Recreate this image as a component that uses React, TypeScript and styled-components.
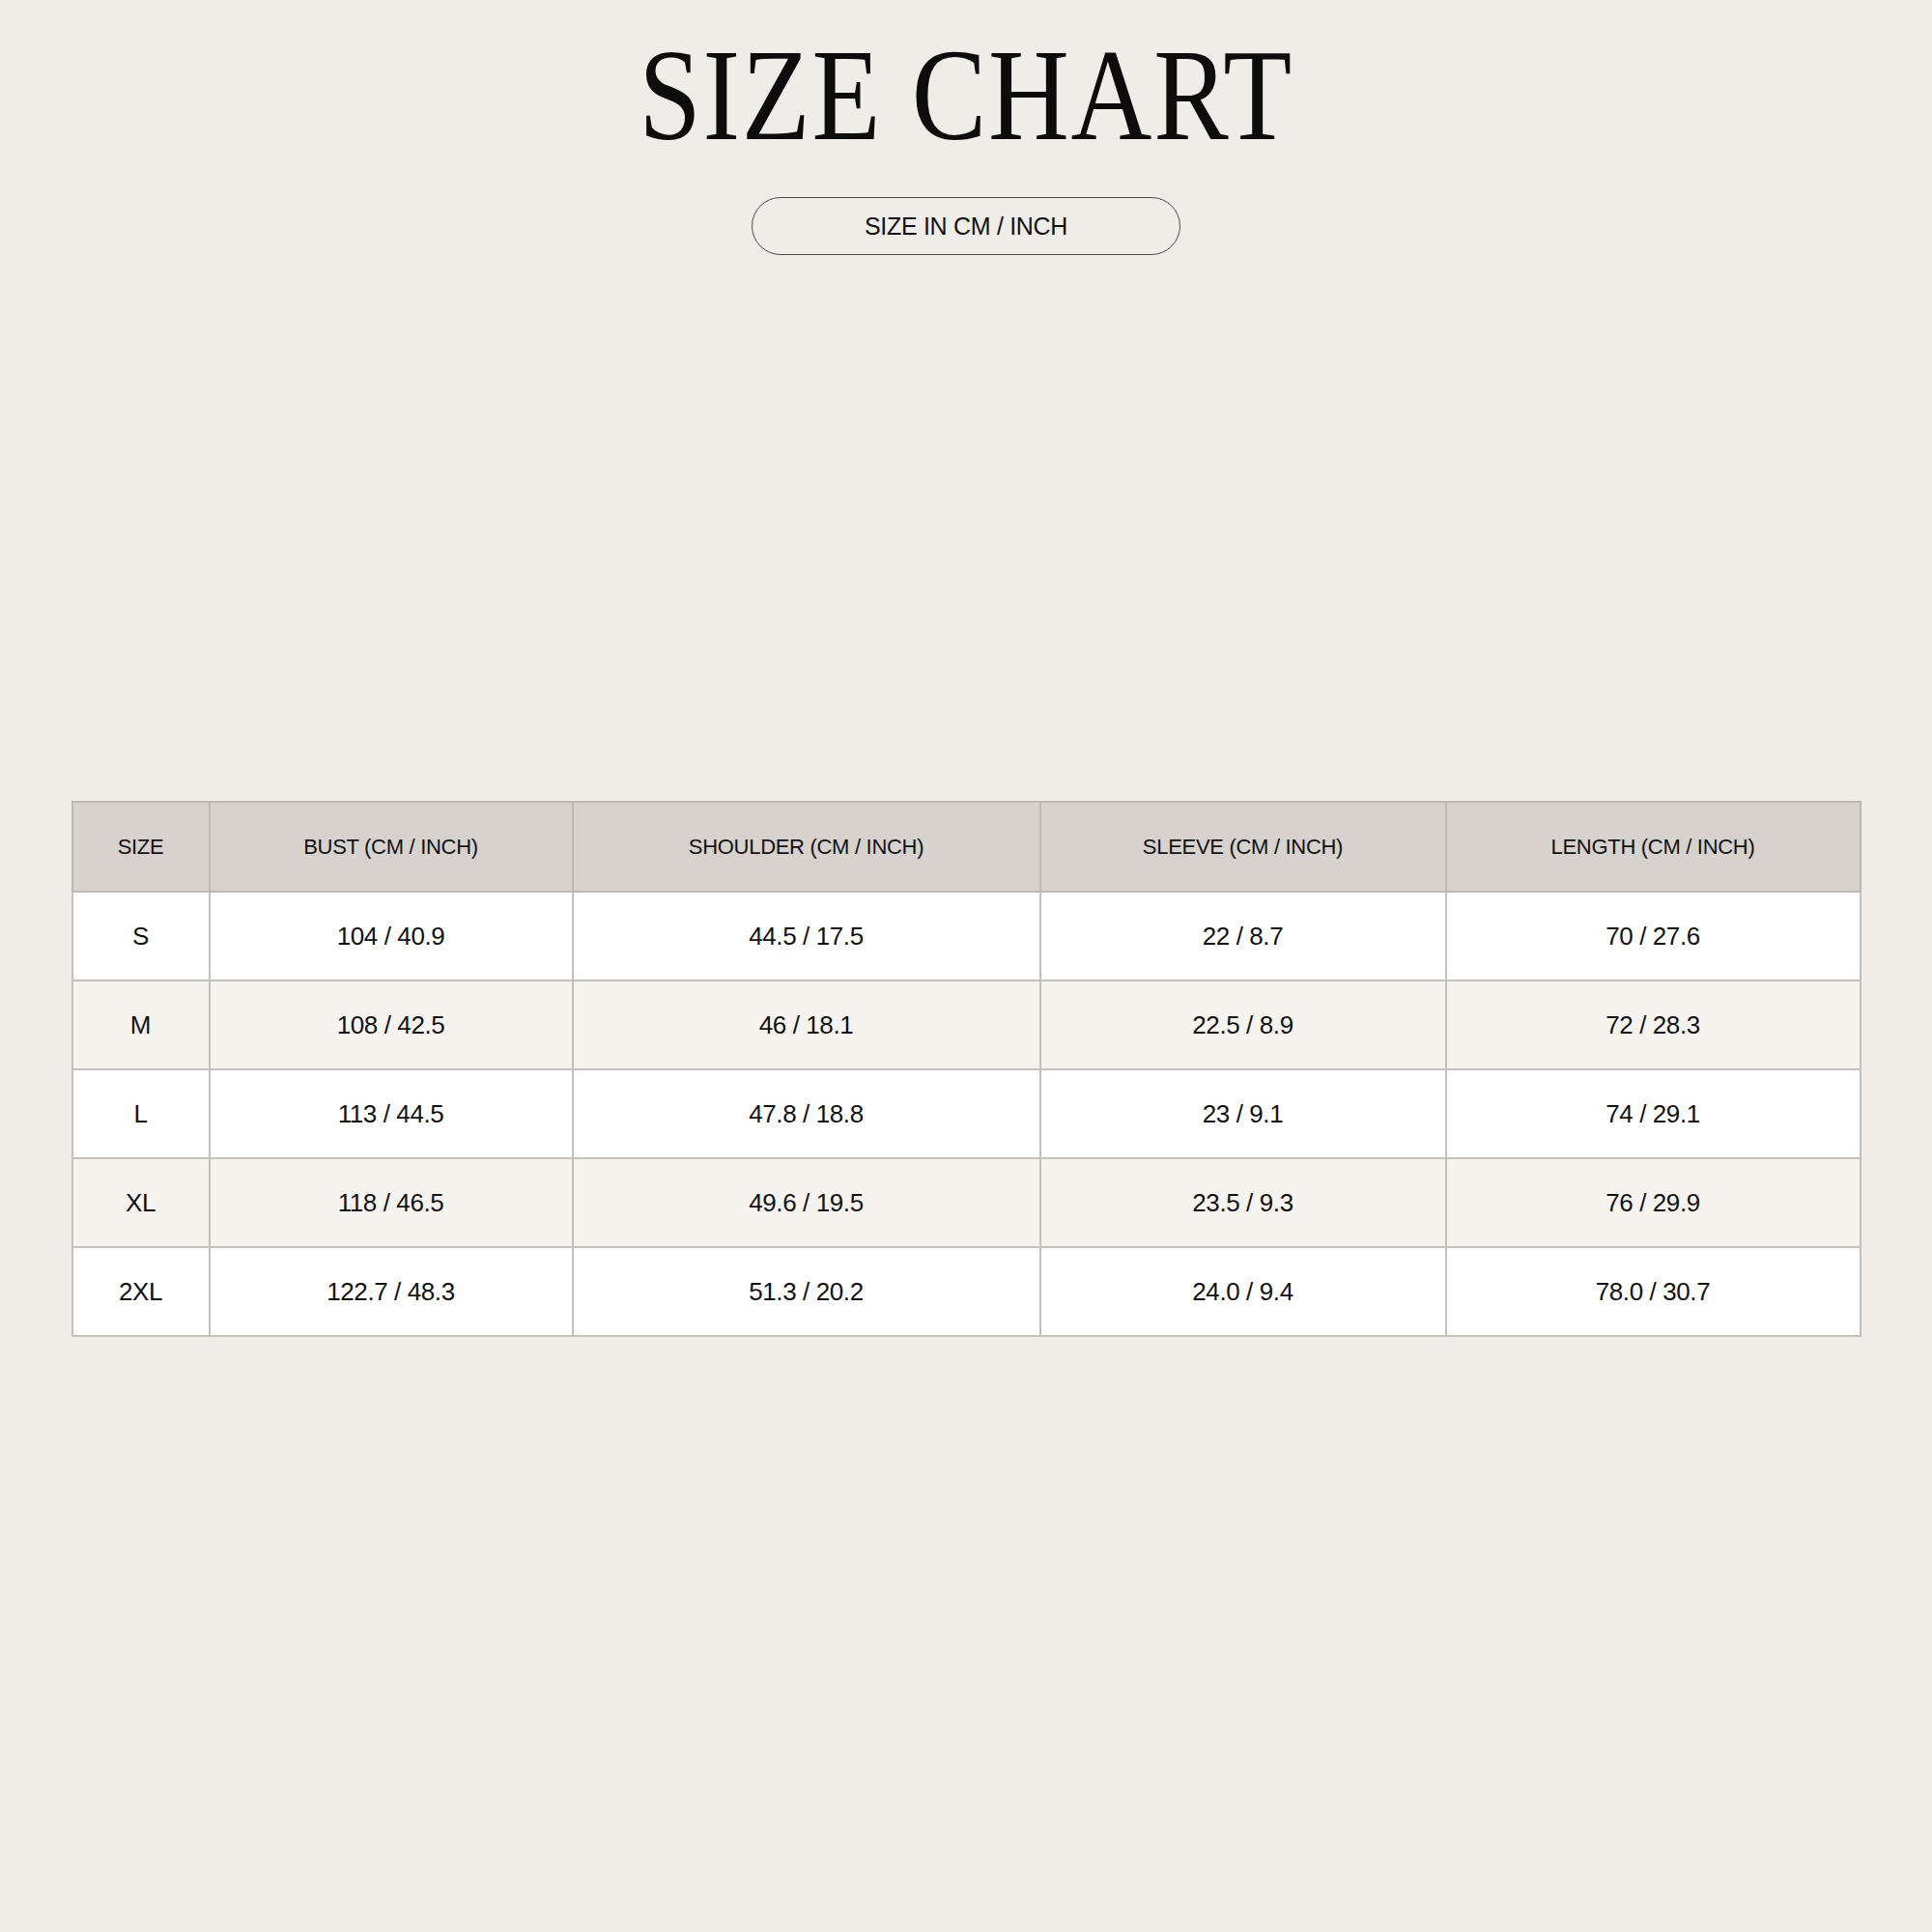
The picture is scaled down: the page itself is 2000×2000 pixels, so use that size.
import React from "react";
import styled, { createGlobalStyle } from "styled-components";

const GlobalStyle = createGlobalStyle`
  html, body {
    margin: 0;
    padding: 0;
    background: #f0ede8;
  }
  body {
    width: 2000px;
    min-height: 2000px;
    font-family: "Liberation Sans", Arial, sans-serif;
    color: #111;
  }
`;

const Page = styled.div`
  width: 2000px;
  height: 2000px;
  display: flex;
  flex-direction: column;
  align-items: center;
  padding-top: 31px;
  box-sizing: border-box;
`;

const Title = styled.h1`
  margin: 0;
  font-family: "Liberation Serif", "Times New Roman", serif;
  font-weight: 400;
  font-size: 135px;
  line-height: 135px;
  letter-spacing: 2px;
  color: #0c0c0c;
  transform: scaleX(0.86);
  white-space: nowrap;
`;

const UnitPill = styled.div`
  margin-top: 38px;
  width: 444px;
  height: 60px;
  box-sizing: border-box;
  border: 1.5px solid #4a4a4a;
  border-radius: 30px;
  display: flex;
  align-items: center;
  justify-content: center;
  font-size: 25px;
  letter-spacing: -0.3px;
  color: #111;
`;

const Table = styled.table`
  margin-top: 565px;
  width: 1851px;
  table-layout: fixed;
  border-collapse: collapse;
  border: 2px solid #bdb8b3;
`;

const HeadCell = styled.th`
  height: 91px;
  padding: 0;
  background: #d7d2cd;
  border: 2px solid #bdb8b3;
  font-weight: 400;
  font-size: 22px;
  letter-spacing: -0.3px;
  text-align: center;
  color: #111;
`;

const Row = styled.tr<{ $alt: boolean }>`
  background: ${(p) => (p.$alt ? "#f7f4f0" : "#ffffff")};
`;

const Cell = styled.td`
  height: 90px;
  padding: 0;
  border: 2px solid #c4c0bb;
  font-size: 26px;
  letter-spacing: -0.4px;
  text-align: center;
  color: #111;
`;

const columns = [
  { label: "SIZE", width: 142 },
  { label: "BUST (CM / INCH)", width: 376 },
  { label: "SHOULDER (CM / INCH)", width: 484 },
  { label: "SLEEVE (CM / INCH)", width: 420 },
  { label: "LENGTH (CM / INCH)", width: 429 },
];

const rows = [
  ["S", "104 / 40.9", "44.5 / 17.5", "22 / 8.7", "70 / 27.6"],
  ["M", "108 / 42.5", "46 / 18.1", "22.5 / 8.9", "72 / 28.3"],
  ["L", "113 / 44.5", "47.8 / 18.8", "23 / 9.1", "74 / 29.1"],
  ["XL", "118 / 46.5", "49.6 / 19.5", "23.5 / 9.3", "76 / 29.9"],
  ["2XL", "122.7 / 48.3", "51.3 / 20.2", "24.0 / 9.4", "78.0 / 30.7"],
];

export default function App() {
  return (
    <>
      <GlobalStyle />
      <Page>
        <Title>SIZE CHART</Title>
        <UnitPill>SIZE IN CM / INCH</UnitPill>
        <Table>
          <colgroup>
            {columns.map((c) => (
              <col key={c.label} style={{ width: c.width }} />
            ))}
          </colgroup>
          <thead>
            <tr>
              {columns.map((c) => (
                <HeadCell key={c.label}>{c.label}</HeadCell>
              ))}
            </tr>
          </thead>
          <tbody>
            {rows.map((r, i) => (
              <Row key={r[0]} $alt={i % 2 === 1}>
                {r.map((v, j) => (
                  <Cell key={j}>{v}</Cell>
                ))}
              </Row>
            ))}
          </tbody>
        </Table>
      </Page>
    </>
  );
}
